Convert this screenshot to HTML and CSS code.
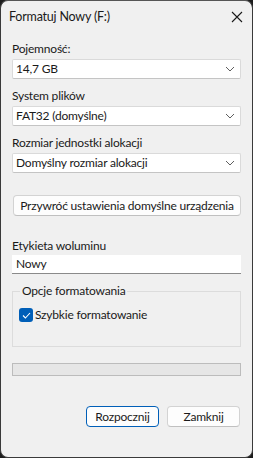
FILE: index.html
```html
<!DOCTYPE html>
<html lang="pl">
<head>
<meta charset="utf-8">
<link rel="stylesheet" href="styles.css">
</head>
<body>
<div class="window">
  <div class="titlebar">
    <span class="title">Formatuj Nowy (F:)</span>
    <svg class="close" width="12" height="12" viewBox="0 0 12 12"><path d="M1 1 L11 11 M11 1 L1 11" stroke="#1a1a1a" stroke-width="1.1" fill="none"/></svg>
  </div>
  <div class="content">
    <div class="label l1">Pojemność:</div>
    <div class="select"><span>14,7 GB</span><svg class="chev" width="10" height="6" viewBox="0 0 10 6"><path d="M1 1 L5 5 L9 1" stroke="#5f5f5f" stroke-width="1" fill="none"/></svg></div>
    <div class="label">System plików</div>
    <div class="select"><span>FAT32 (domyślne)</span><svg class="chev" width="10" height="6" viewBox="0 0 10 6"><path d="M1 1 L5 5 L9 1" stroke="#5f5f5f" stroke-width="1" fill="none"/></svg></div>
    <div class="label">Rozmiar jednostki alokacji</div>
    <div class="select"><span>Domyślny rozmiar alokacji</span><svg class="chev" width="10" height="6" viewBox="0 0 10 6"><path d="M1 1 L5 5 L9 1" stroke="#5f5f5f" stroke-width="1" fill="none"/></svg></div>
    <button class="btn restore">Przywróć ustawienia domyślne urządzenia</button>
    <div class="label vol">Etykieta woluminu</div>
    <div class="input">Nowy</div>
    <fieldset class="group">
      <legend>Opcje formatowania</legend>
      <label class="check"><span class="box"><svg width="9" height="7" viewBox="0 0 9 7"><path d="M1 3.5 L3.4 6 L8 1" stroke="#fff" stroke-width="1.1" fill="none"/></svg></span>Szybkie formatowanie</label>
    </fieldset>
    <div class="progress"></div>
    <div class="actions">
      <button class="btn primary">Rozpocznij</button>
      <button class="btn">Zamknij</button>
    </div>
  </div>
</div>
</body>
</html>
```
FILE: styles.css
```css
* { box-sizing: border-box; }
html, body { margin: 0; padding: 0; background: #1c1c1c; }
body { width: 253px; height: 458px; overflow: hidden; font-family: "Lato", "Noto Sans", sans-serif; font-size: 12px; letter-spacing: -0.2px; color: #1a1a1a; }
.window { width: 253px; height: 458px; background: #f0f0f0; border-radius: 8px; border: 1px solid #3a3a3a; border-top-color: #555; overflow: hidden; display: flex; flex-direction: column; }
.titlebar { height: 31px; display: flex; align-items: center; justify-content: space-between; padding: 0 9px 0 8px; }
.title { line-height: 16px; font-size: 12.5px; }
.close { display: block; }
.content { padding: 0 11px; display: flex; flex-direction: column; }
.label { line-height: 16px; margin-top: 9px; white-space: nowrap; }
.label.l1 { margin-top: 9px; }
.select { height: 20px; margin-top: 2px; background: #fff; border: 1px solid #dadada; border-bottom-color: #c4c4c4; border-radius: 2px; display: flex; align-items: center; justify-content: space-between; padding: 0 5px 0 3px; line-height: 16px; white-space: nowrap; }
.chev { display: block; }
.btn { font-family: inherit; font-size: 12px; letter-spacing: -0.2px; color: #1a1a1a; background: #fdfdfd; border: 1px solid #d3d3d3; border-bottom-color: #c0c0c0; border-radius: 4px; height: 21px; padding: 0; line-height: 17px; white-space: nowrap; }
.restore { margin-top: 22px; width: 228px; margin-left: 1px; }
.label.vol { margin-top: 22px; }
.input { height: 19px; margin-top: 1px; background: #fff; border-bottom: 1px solid #8a8a8a; padding: 0 4px; line-height: 18px; }
.group { margin: 10px 0 0; padding: 0 6px; border: 1px solid #dcdcdc; height: 63px; min-width: 0; }
.group legend { padding: 0 2px; margin-left: 1px; line-height: 14px; }
.check { display: flex; align-items: center; margin-top: 9px; line-height: 16px; white-space: nowrap; }
.box { width: 14px; height: 14px; background: #005fb8; border-radius: 3px; display: flex; align-items: center; justify-content: center; margin-right: 2px; }
.box svg { display: block; }
.progress { margin-top: 16px; height: 13px; background: #e6e6e6; border: 1px solid #bcbcbc; }
.actions { margin-top: 30px; display: flex; justify-content: flex-end; gap: 8px; padding-right: 1px; }
.actions .btn { width: 73px; }
.primary { border: 1px solid #005fb8; }
```
